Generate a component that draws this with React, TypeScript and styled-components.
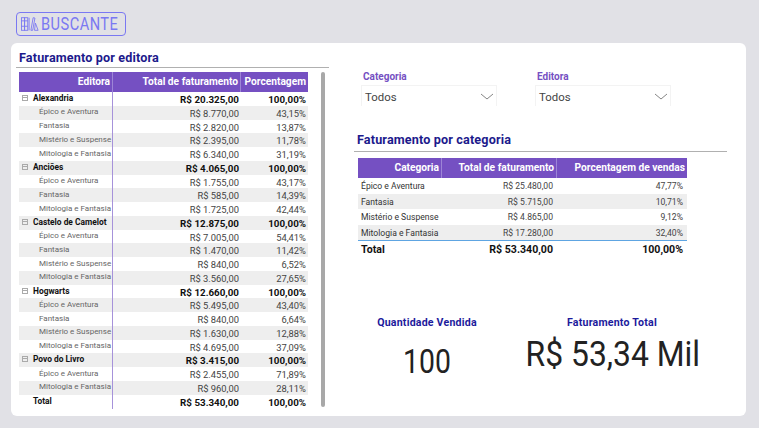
import styled, { createGlobalStyle } from "styled-components";

interface PublisherRow {
  name: string;
  total: string;
  percent: string;
  level: "group" | "child" | "total";
}

const publisherRows: PublisherRow[] = [
  { name: "Alexandria", total: "R$ 20.325,00", percent: "100,00%", level: "group" },
  { name: "Épico e Aventura", total: "R$ 8.770,00", percent: "43,15%", level: "child" },
  { name: "Fantasia", total: "R$ 2.820,00", percent: "13,87%", level: "child" },
  { name: "Mistério e Suspense", total: "R$ 2.395,00", percent: "11,78%", level: "child" },
  { name: "Mitologia e Fantasia", total: "R$ 6.340,00", percent: "31,19%", level: "child" },
  { name: "Anciões", total: "R$ 4.065,00", percent: "100,00%", level: "group" },
  { name: "Épico e Aventura", total: "R$ 1.755,00", percent: "43,17%", level: "child" },
  { name: "Fantasia", total: "R$ 585,00", percent: "14,39%", level: "child" },
  { name: "Mitologia e Fantasia", total: "R$ 1.725,00", percent: "42,44%", level: "child" },
  { name: "Castelo de Camelot", total: "R$ 12.875,00", percent: "100,00%", level: "group" },
  { name: "Épico e Aventura", total: "R$ 7.005,00", percent: "54,41%", level: "child" },
  { name: "Fantasia", total: "R$ 1.470,00", percent: "11,42%", level: "child" },
  { name: "Mistério e Suspense", total: "R$ 840,00", percent: "6,52%", level: "child" },
  { name: "Mitologia e Fantasia", total: "R$ 3.560,00", percent: "27,65%", level: "child" },
  { name: "Hogwarts", total: "R$ 12.660,00", percent: "100,00%", level: "group" },
  { name: "Épico e Aventura", total: "R$ 5.495,00", percent: "43,40%", level: "child" },
  { name: "Fantasia", total: "R$ 840,00", percent: "6,64%", level: "child" },
  { name: "Mistério e Suspense", total: "R$ 1.630,00", percent: "12,88%", level: "child" },
  { name: "Mitologia e Fantasia", total: "R$ 4.695,00", percent: "37,09%", level: "child" },
  { name: "Povo do Livro", total: "R$ 3.415,00", percent: "100,00%", level: "group" },
  { name: "Épico e Aventura", total: "R$ 2.455,00", percent: "71,89%", level: "child" },
  { name: "Mitologia e Fantasia", total: "R$ 960,00", percent: "28,11%", level: "child" },
  { name: "Total", total: "R$ 53.340,00", percent: "100,00%", level: "total" },
];

const categoryRows = [
  ["Épico e Aventura", "R$ 25.480,00", "47,77%"],
  ["Fantasia", "R$ 5.715,00", "10,71%"],
  ["Mistério e Suspense", "R$ 4.865,00", "9,12%"],
  ["Mitologia e Fantasia", "R$ 17.280,00", "32,40%"],
];

export default function App() {
  return (
    <>
      <GlobalStyle />
      <Page>
        <LogoBox>
          <LogoIcon width="18" height="16" viewBox="0 0 20 17" fill="none" stroke="#7a78f2" strokeWidth="1">
            <rect x="0.5" y="1.5" width="3.5" height="14" />
            <rect x="4" y="1.5" width="3.5" height="14" />
            <path d="M0.5 5h7M0.5 11h7M9 1.5v14" />
            <path d="M11 15.5L13.5 1.5l2 .4L13 15.5z" />
            <path d="M15 15.5l1-8 3 8z" />
          </LogoIcon>
          <LogoText>BUSCANTE</LogoText>
        </LogoBox>
        <Card>
          <LeftColumn>
            <SectionTitle>Faturamento por editora</SectionTitle>
            <TableArea>
              <PublisherTable>
                <PublisherHeader>
                  <HeaderCell>Editora</HeaderCell>
                  <HeaderCell>Total de faturamento</HeaderCell>
                  <HeaderCell $last>Porcentagem</HeaderCell>
                </PublisherHeader>
                {publisherRows.map((row, i) => (
                  <PublisherLine key={i} $alt={i % 2 === 1}>
                    <NameCell $level={row.level}>
                      {row.level === "group" && <ExpandBox />}
                      {row.name}
                    </NameCell>
                    <ValueCell $strong={row.level !== "child"}>{row.total}</ValueCell>
                    <ValueCell $strong={row.level !== "child"}>{row.percent}</ValueCell>
                  </PublisherLine>
                ))}
              </PublisherTable>
              <ScrollBar />
            </TableArea>
          </LeftColumn>
          <RightColumn>
            <Filters>
              {["Categoria", "Editora"].map((label) => (
                <Filter key={label}>
                  <FilterLabel>{label}</FilterLabel>
                  <Dropdown>
                    Todos
                    <svg width="14" height="7" viewBox="0 0 14 7" fill="none" stroke="#666" strokeWidth="0.8">
                      <path d="M1 1l6 5 6-5" />
                    </svg>
                  </Dropdown>
                </Filter>
              ))}
            </Filters>
            <CategoryTitle>Faturamento por categoria</CategoryTitle>
            <CategoryTable>
              <CategoryHeader>
                <HeaderCell>Categoria</HeaderCell>
                <HeaderCell>Total de faturamento</HeaderCell>
                <HeaderCell $last>Porcentagem de vendas</HeaderCell>
              </CategoryHeader>
              {categoryRows.map((row, i) => (
                <CategoryLine key={row[0]} $alt={i % 2 === 1}>
                  <CategoryName>{row[0]}</CategoryName>
                  <CategoryValue>{row[1]}</CategoryValue>
                  <CategoryValue>{row[2]}</CategoryValue>
                </CategoryLine>
              ))}
              <CategoryTotal>
                <span>Total</span>
                <span>R$ 53.340,00</span>
                <span>100,00%</span>
              </CategoryTotal>
            </CategoryTable>
            <Kpis>
              <Kpi $width={140}>
                <KpiLabel>Quantidade Vendida</KpiLabel>
                <KpiSmallValue>100</KpiSmallValue>
              </Kpi>
              <Kpi $width={190}>
                <KpiLabel>Faturamento Total</KpiLabel>
                <KpiLargeValue>R$ 53,34 Mil</KpiLargeValue>
              </Kpi>
            </Kpis>
          </RightColumn>
        </Card>
      </Page>
    </>
  );
}

const GlobalStyle = createGlobalStyle`
  html, body {
    margin: 0;
    padding: 0;
    background: #e1e1e6;
    font-family: Roboto, "Liberation Sans", sans-serif;
  }
`;

const Page = styled.div`
  box-sizing: border-box;
  width: 759px;
  height: 428px;
  padding: 12px 13px 12px 11px;
  overflow: hidden;
  background: #e1e1e6;
`;

const LogoBox = styled.div`
  box-sizing: border-box;
  display: flex;
  align-items: center;
  gap: 2px;
  width: 110px;
  height: 24px;
  margin-left: 5px;
  padding-left: 4px;
  border: 1px solid #7a78f2;
  border-radius: 4px;
`;

const LogoIcon = styled.svg`
  flex: none;
`;

const LogoText = styled.span`
  display: inline-block;
  font-size: 19px;
  line-height: 20px;
  letter-spacing: 0.6px;
  color: #7a78f2;
  transform: scaleX(0.77);
  transform-origin: left center;
`;

const Card = styled.div`
  box-sizing: border-box;
  display: flex;
  width: 735px;
  height: 373px;
  margin-top: 7px;
  background: #fff;
  border-radius: 6px;
`;

const LeftColumn = styled.div`
  flex: none;
  width: 313px;
  margin-left: 5px;
`;

const SectionTitle = styled.h2`
  box-sizing: border-box;
  height: 25px;
  margin: 0;
  padding: 7px 0 0 3px;
  border-bottom: 1px solid #b0b0b0;
  font-size: 12.6px;
  line-height: 16px;
  font-weight: 700;
  letter-spacing: 0.15px;
  color: #1c1a8c;
`;

const TableArea = styled.div`
  display: flex;
  margin-top: 4px;
  padding-left: 3px;
`;

const PublisherTable = styled.div`
  flex: none;
  width: 289px;
`;

const PublisherHeader = styled.div`
  display: grid;
  grid-template-columns: 94px 128px 67px;
  height: 20px;
  background: #7550c2;
`;

const HeaderCell = styled.div<{ $last?: boolean }>`
  padding-right: 2px;
  border-right: ${(p) => (p.$last ? "none" : "1px solid #9d85d6")};
  font-size: 10.2px;
  line-height: 19px;
  font-weight: 700;
  text-align: right;
  color: #fff;
  white-space: nowrap;
`;

const PublisherLine = styled.div<{ $alt: boolean }>`
  display: grid;
  grid-template-columns: 94px 128px 67px;
  height: 13.75px;
  background: ${(p) => (p.$alt ? "#eeeeee" : "#fff")};
`;

const NameCell = styled.div<{ $level: PublisherRow["level"] }>`
  display: flex;
  align-items: center;
  gap: 5px;
  padding-left: ${(p) => (p.$level === "child" ? "20px" : p.$level === "total" ? "14px" : "3px")};
  padding-bottom: 2px;
  border-right: 1px solid #a692da;
  font-size: ${(p) => (p.$level === "child" ? "8px" : "8.4px")};
  font-weight: ${(p) => (p.$level === "child" ? 400 : 700)};
  color: ${(p) => (p.$level === "child" ? "#666" : "#111")};
  white-space: nowrap;
`;

const ExpandBox = styled.span`
  box-sizing: border-box;
  position: relative;
  flex: none;
  width: 6px;
  height: 6px;
  border: 1px solid #aaa;

  &::after {
    content: "";
    position: absolute;
    left: 0;
    top: 1px;
    width: 4px;
    height: 1px;
    background: #aaa;
  }
`;

const ValueCell = styled.div<{ $strong: boolean }>`
  padding: 1px 2px 0 0;
  font-size: ${(p) => (p.$strong ? "9.8px" : "9.4px")};
  line-height: 13px;
  font-weight: ${(p) => (p.$strong ? 700 : 400)};
  text-align: right;
  color: ${(p) => (p.$strong ? "#111" : "#444")};
  white-space: nowrap;
`;

const ScrollBar = styled.div`
  flex: none;
  width: 4px;
  height: 335px;
  margin-left: 13px;
  background: #a8a8a8;
  border-radius: 2px;
`;

const RightColumn = styled.div`
  flex: 1;
  margin-left: 25px;
`;

const Filters = styled.div`
  display: flex;
  gap: 38px;
  margin: 27px 0 0 7px;
`;

const Filter = styled.div`
  width: 136px;
`;

const FilterLabel = styled.div`
  padding-left: 2px;
  font-size: 10px;
  line-height: 13px;
  font-weight: 700;
  color: #7550c2;
`;

const Dropdown = styled.div`
  box-sizing: border-box;
  display: flex;
  align-items: center;
  justify-content: space-between;
  height: 21px;
  margin-top: 2px;
  padding: 1px 2px 0 3px;
  border: 1px solid #f3f3f3;
  border-bottom: none;
  font-size: 11.4px;
  color: #444;
`;

const CategoryTitle = styled(SectionTitle)`
  width: 373px;
  height: 26px;
  margin-top: 20px;
  padding-top: 6px;
`;

const CategoryTable = styled.div`
  width: 329px;
  margin: 6px 0 0 4px;
`;

const CategoryHeader = styled.div`
  display: grid;
  grid-template-columns: 84px 115px 130px;
  height: 20px;
  background: #7550c2;
`;

const CategoryLine = styled.div<{ $alt: boolean }>`
  display: grid;
  grid-template-columns: 84px 115px 130px;
  height: 15.5px;
  background: ${(p) => (p.$alt ? "#eeeeee" : "#fff")};
`;

const CategoryName = styled.div`
  padding: 1px 0 0 3px;
  font-size: 8.6px;
  line-height: 15px;
  color: #333;
  white-space: nowrap;
`;

const CategoryValue = styled.div`
  padding: 1px 4px 0 0;
  font-size: 8.6px;
  line-height: 15px;
  text-align: right;
  color: #444;
  white-space: nowrap;
`;

const CategoryTotal = styled.div`
  display: grid;
  grid-template-columns: 84px 115px 130px;
  height: 16px;
  border-top: 1px solid #5ea5e2;
  font-size: 10.6px;
  line-height: 18px;
  font-weight: 700;
  color: #111;

  span {
    padding-right: 4px;
    text-align: right;
  }

  span:first-child {
    padding-left: 3px;
    text-align: left;
  }
`;

const Kpis = styled.div`
  display: flex;
  gap: 20px;
  margin: 59px 0 0 3px;
`;

const Kpi = styled.div<{ $width: number }>`
  width: ${(p) => p.$width}px;
  text-align: center;
`;

const KpiLabel = styled.div`
  font-size: 10.6px;
  line-height: 14px;
  font-weight: 700;
  letter-spacing: 0.2px;
  color: #1c1a9c;
`;

const KpiSmallValue = styled.div`
  margin-top: 13px;
  font-size: 33px;
  line-height: 38px;
  color: #222;
  transform: scaleX(0.86);
`;

const KpiLargeValue = styled.div`
  margin-top: 6px;
  font-size: 35px;
  line-height: 38px;
  white-space: nowrap;
  color: #222;
  transform: scaleX(0.91);
`;
